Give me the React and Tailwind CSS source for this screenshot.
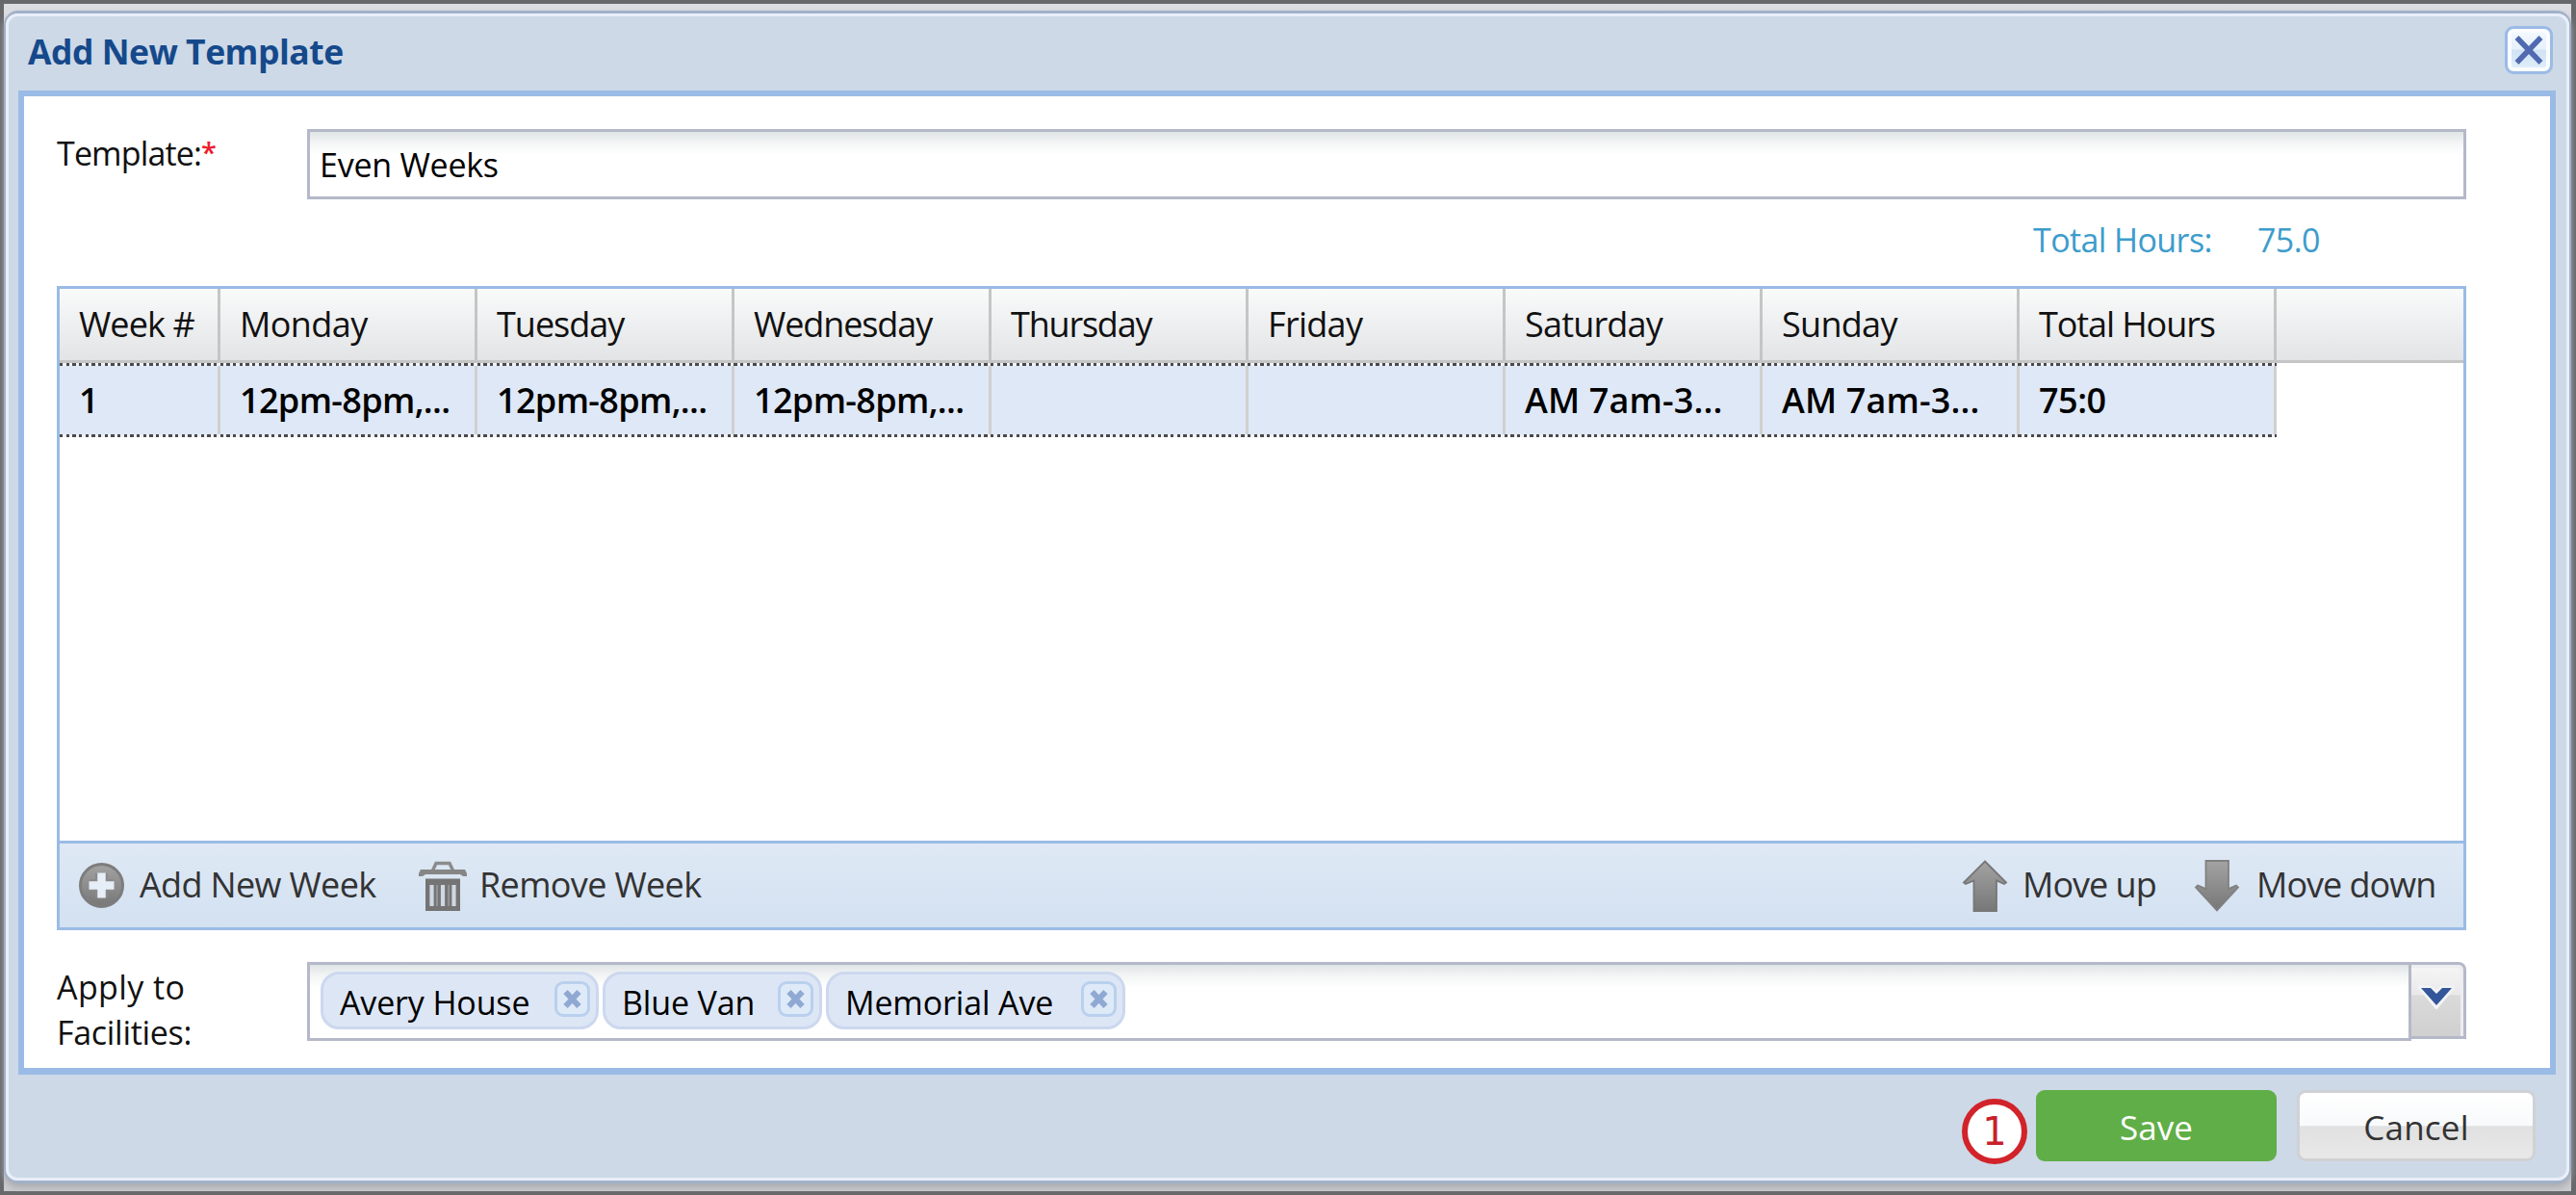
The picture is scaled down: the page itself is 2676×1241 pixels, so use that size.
import React from 'react';

const columns = [
  { title: 'Week #', value: '1', width: 'w-[167px]', tracking: 'tracking-[-0.9px]', cellTracking: 'tracking-normal' },
  { title: 'Monday', value: '12pm-8pm,...', width: 'w-[267px]', tracking: 'tracking-[-0.6px]', cellTracking: 'tracking-[-0.65px]' },
  { title: 'Tuesday', value: '12pm-8pm,...', width: 'w-[267px]', tracking: 'tracking-[-1px]', cellTracking: 'tracking-[-0.65px]' },
  { title: 'Wednesday', value: '12pm-8pm,...', width: 'w-[267px]', tracking: 'tracking-[-1.1px]', cellTracking: 'tracking-[-0.65px]' },
  { title: 'Thursday', value: '', width: 'w-[267px]', tracking: 'tracking-[-1.2px]', cellTracking: 'tracking-normal' },
  { title: 'Friday', value: '', width: 'w-[267px]', tracking: 'tracking-[-0.7px]', cellTracking: 'tracking-normal' },
  { title: 'Saturday', value: 'AM 7am-3...', width: 'w-[267px]', tracking: 'tracking-[-0.8px]', cellTracking: 'tracking-[0.15px]' },
  { title: 'Sunday', value: 'AM 7am-3...', width: 'w-[267px]', tracking: 'tracking-[-0.7px]', cellTracking: 'tracking-[0.15px]' },
  { title: 'Total Hours', value: '75:0', width: 'w-[267px]', tracking: 'tracking-[-1.1px]', cellTracking: 'tracking-[-0.5px]' },
];

const facilities = [
  { name: 'Avery House', width: 'w-[289px]' },
  { name: 'Blue Van', width: 'w-[228px]' },
  { name: 'Memorial Ave', width: 'w-[311px]' },
];

function IconGradient({ id }) {
  return (
    <defs>
      <linearGradient id={id} x1="0" y1="0" x2="0" y2="1">
        <stop offset="0" stopColor="#a3a3a3" />
        <stop offset="1" stopColor="#777777" />
      </linearGradient>
    </defs>
  );
}

function AddIcon() {
  return (
    <svg className="h-[48px] w-[48px] shrink-0" viewBox="0 0 48 48">
      <IconGradient id="addFill" />
      <circle cx="23.5" cy="23.500" r="22" fill="url(#addFill)" stroke="#7d7d7d" strokeWidth="3" />
      <path d="M23.500 11v25M11 23.500h25" stroke="#8a8a8a" strokeWidth="13" />
      <path d="M23.500 10.500v26M10.500 23.500h26" stroke="#e6eef7" strokeWidth="8.500" />
    </svg>
  );
}

function TrashIcon() {
  return (
    <svg className="h-[52px] w-[50px] shrink-0" viewBox="0 0 50 52">
      <path d="M14 11l4-8.5h14l4 8.5" fill="none" stroke="#8c8c8c" strokeWidth="3.4" />
      <path d="M2 9h46l2 4v3h-4l-3-2H7l-3 2H0v-3z" fill="#868686" />
      <path d="M7 18.5h36v33.5H7z" fill="#747474" />
      <path d="M13.500 25v22M25 25v22M36.500 25v22" stroke="#cfd8e2" strokeWidth="4.200" />
      <path d="M19 25v22M31 25v22" stroke="#9a9ea2" strokeWidth="1.500" />
    </svg>
  );
}

function ArrowUpIcon() {
  return (
    <svg className="h-[54px] w-[48px] shrink-0" viewBox="0 0 48 54">
      <IconGradient id="upFill" />
      <path
        d="M24 1.500L46 23.500L44 25L36 21.500V53H12.500V21.500L4 25L2 23.500z"
        fill="url(#upFill)"
        stroke="#777777"
        strokeWidth="1.800"
      />
    </svg>
  );
}

function ArrowDownIcon() {
  return (
    <svg className="h-[54px] w-[48px] shrink-0" viewBox="0 0 48 54">
      <IconGradient id="downFill" />
      <path
        d="M12.500 1H36V30L44 26.500L46 28.500L24 52.500L2 28.500L4 26.500L12.500 30z"
        fill="url(#downFill)"
        stroke="#808080"
        strokeWidth="1.800"
      />
    </svg>
  );
}

function ToolbarButton({ icon, label, className }) {
  return (
    <button className={`flex h-full items-center text-[36px] text-[#333333] whitespace-nowrap ${className}`}>
      {icon}
      <span className="pb-px">{label}</span>
    </button>
  );
}

function DottedLine() {
  return (
    <div className="h-[3px] w-full bg-[repeating-linear-gradient(90deg,#4a4a4a_0px,#4a4a4a_3.3px,#eef1f6_3.3px,#eef1f6_6.67px)]"></div>
  );
}

function WeekGrid() {
  return (
    <div className="flex h-[669px] w-[2503px] flex-col border-[3px] border-[#9abbe5] bg-white">
      {/* Column headers */}
      <div className="flex h-[77px] border-b-[3px] border-[#c5c5c5] bg-linear-to-b from-[#f9fafa] to-[#e3e4e6]">
        {columns.map((col) => (
          <div
            key={col.title}
            className={`flex shrink-0 items-center border-r-[3px] border-[#c5c5c5] pl-[20px] text-[36px] text-[#111111] whitespace-nowrap ${col.width} ${col.tracking}`}
          >
            {col.title}
          </div>
        ))}
      </div>

      {/* Selected week */}
      <div className="w-[2303px]">
        <DottedLine />
        <div className="flex h-[71px] bg-[#dfe8f6]">
          {columns.map((col) => (
            <div
              key={col.title}
              className={`flex shrink-0 items-center border-r-[3px] border-[#d0d0d0] pl-[20px] text-[36px] font-semibold text-black whitespace-nowrap ${col.width} ${col.cellTracking}`}
            >
              {col.value}
            </div>
          ))}
        </div>
        <DottedLine />
      </div>

      {/* Bottom toolbar */}
      <div className="mt-auto flex h-[90px] items-center border-t-[3px] border-[#9abbe5] bg-linear-to-b from-[#dfe9f5] to-[#d3e1f1] pl-[20px]">
        <ToolbarButton className="w-[353px] gap-[15px] tracking-[-0.65px]" icon={<AddIcon />} label="Add New Week" />
        <ToolbarButton className="gap-[13px] tracking-[-0.65px]" icon={<TrashIcon />} label="Remove Week" />
        <ToolbarButton className="ml-auto w-[241px] gap-[15px] tracking-[-1px]" icon={<ArrowUpIcon />} label="Move up" />
        <ToolbarButton className="w-[280px] gap-[17px] tracking-[-1px]" icon={<ArrowDownIcon />} label="Move down" />
      </div>
    </div>
  );
}

function FacilityChip({ name, width }) {
  return (
    <div
      className={`flex h-[60px] shrink-0 justify-between rounded-[19px] border-[3px] border-[#ccd8ee] bg-[#dde6f5] pl-[17px] pr-[6px] ${width}`}
    >
      <span className="text-[34px] leading-[59px] tracking-[-0.15px] text-black whitespace-nowrap">{name}</span>
      <button className="mt-[7px] flex h-[37px] w-[37px] items-center justify-center rounded-[9px] border-[3px] border-[#b9d0ee] bg-[#dfeaf8]">
        <svg className="h-[21px] w-[21px]" viewBox="0 0 21 21">
          <path d="M3.500 3l14 15M17.500 3l-14 15" stroke="#8fa9d3" strokeWidth="6" />
        </svg>
      </button>
    </div>
  );
}

function FacilitySelect() {
  return (
    <div className="flex w-[2243px] items-start">
      <div className="flex h-[82px] w-[2186px] gap-[4px] border-[3px] border-[#b5b8c8] bg-[linear-gradient(#dfe4e6,#f3f5f5_11px,#ffffff_24px)] pl-[11px] pt-[7px]">
        {facilities.map((f) => (
          <FacilityChip key={f.name} name={f.name} width={f.width} />
        ))}
      </div>
      <button className="flex h-[80px] w-[57px] justify-center rounded-tr-[8px] border-y-[3px] border-r-[3px] border-[#b5b8c8] bg-[linear-gradient(#f6f6f6,#e9e9e9_42%,#dadada_43%,#d0d0d0)] pt-[20px] pr-[3px] shadow-[inset_-3px_3px_0_#ededf2]">
        <svg className="h-[26px] w-[38px]" viewBox="0 0 38 26">
          <path d="M3 4h10l6 6 6-6h10L19 23z" fill="none" stroke="#f3f4f7" strokeWidth="5" />
          <path d="M3 4h10l6 6 6-6h10L19 22z" fill="#33569a" />
        </svg>
      </button>
    </div>
  );
}

export default function App() {
  return (
    <div className="h-[1241px] w-[2676px] overflow-hidden bg-[#66686b] pt-[4px] pb-[4px] pl-[4px] pr-[5px] font-['Open_Sans','Noto_Sans',sans-serif]">
      <div className="h-full bg-linear-to-b from-[#dcdde2] to-[#c9cacd] pt-[7px]">
        <div className="h-[1218px] rounded-[15px] border-x-2 border-y-[3px] border-[#a1b1c8] bg-[#cdd9e7] shadow-[0_4px_6px_#a9abb0]">
          <div className="flex h-full flex-col rounded-[12px] border-[3px] border-[#e9effa]">
            {/* Title bar */}
            <div className="flex h-[77px] items-start justify-between pl-[20px] pr-[14px]">
              <h1 className="text-[35.5px] font-bold leading-[73px] tracking-[-0.5px] text-[#15498b]">Add New Template</h1>
              <button className="mt-[10px] flex h-[50px] w-[50px] items-center justify-center rounded-[9px] border-[3px] border-[#9abbe5] bg-[linear-gradient(#f4f9fe,#e6f1fb_48%,#cfe2f4_50%,#e2f0fb)] shadow-[inset_0_0_0_4px_#fafcff]">
                <svg className="h-[32px] w-[32px]" viewBox="0 0 32 32">
                  <path d="M3.500 3l25 26M28.500 3l-25 26" stroke="#5069b1" strokeWidth="5.500" />
                </svg>
              </button>
            </div>

            {/* Form body */}
            <div className="ml-[10px] mr-[11px] h-[1022px] border-[6px] border-b-[7px] border-[#9abbe5] bg-white pl-[34px] pt-[34px]">
              <div className="flex text-[34px] text-black">
                <label className="w-[260px] leading-[51px] tracking-[-0.85px] text-[#111111]">
                  Template:<span className="align-[3px] text-[29px] font-semibold leading-none text-[#ee1c2e]">*</span>
                </label>
                <div className="flex h-[73px] w-[2243px] items-center border-[3px] border-[#b5b8c8] bg-[linear-gradient(#dfe4e6,#f3f5f5_11px,#ffffff_24px)] pt-[2px] pl-[10px] tracking-[-0.25px]">
                  Even Weeks
                </div>
              </div>

              <div className="flex h-[90px] items-center pb-[5px] pl-[2053px] text-[34px] tracking-[-0.6px] text-[#3d9ccc]">
                <span className="w-[233px]">Total Hours:</span>
                <span>75.0</span>
              </div>

              <WeekGrid />

              <div className="mt-[33px] flex">
                <label className="w-[260px] pt-[3px] text-[34px] leading-[46.500px] text-[#111111]">
                  <span className="block tracking-[0.4px]">Apply to</span>
                  <span className="block tracking-[-0.3px]">Facilities:</span>
                </label>
                <FacilitySelect />
              </div>
            </div>

            {/* Footer buttons */}
            <div className="flex items-start justify-end pr-[32px] pt-[16px] text-[35px]">
              <div className="mt-[9px] mr-[9px] flex h-[68px] w-[68px] items-center justify-center rounded-full border-[6px] border-[#d2232a] bg-white font-['DejaVu_Sans',sans-serif] text-[40px] leading-none text-[#c9202b]">
                1
              </div>
              <button className="mr-[21px] h-[74px] w-[250px] rounded-[9px] bg-[#60ae47] pt-[4px] tracking-[0.1px] text-white">
                Save
              </button>
              <button className="h-[74px] w-[248px] rounded-[9px] border-[3px] border-[#d0d1d3] bg-[linear-gradient(#ffffff,#f8fafb_50%,#e0e1e0_51%,#e8e8e8)] pt-[4px] tracking-[0.2px] text-[#333333]">
                Cancel
              </button>
            </div>
          </div>
        </div>
      </div>
    </div>
  );
}
